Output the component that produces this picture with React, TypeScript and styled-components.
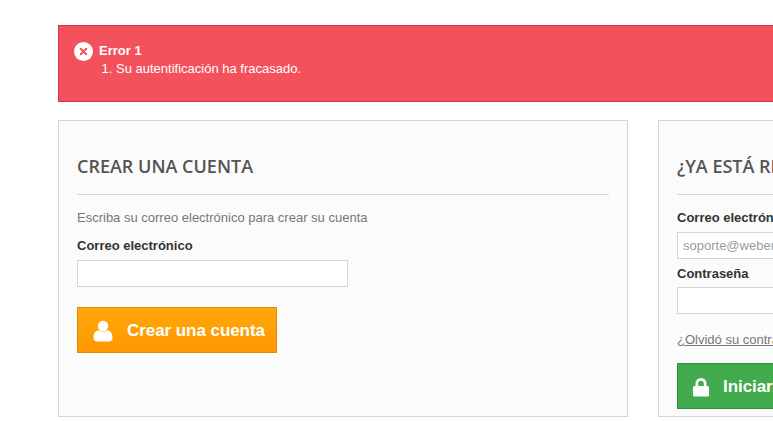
import React from "react";
import styled, { createGlobalStyle } from "styled-components";

const Global = createGlobalStyle`
  html, body { margin: 0; padding: 0; background: #fff; overflow: hidden; }
  body { font-family: "Liberation Sans", Arial, sans-serif; font-size: 13px; color: #777; }
`;

const Page = styled.div`
  width: 773px;
  height: 421px;
  overflow: hidden;
  box-sizing: border-box;
  padding: 25px 0 0 58px;
`;

const Container = styled.div`
  width: 1170px;
  display: flex;
  flex-direction: column;
  gap: 18px;
`;

const Alert = styled.div`
  box-sizing: border-box;
  height: 77px;
  background: #f3515c;
  border: 1px solid #d4343f;
  padding: 16px 15px;
  display: flex;
  gap: 6px;
  color: #fff;
  font-size: 13px;
  line-height: 18px;
`;

const AlertIcon = styled.svg`
  width: 19px;
  height: 19px;
  flex: none;
`;

const AlertTitle = styled.div`
  font-weight: 700;
`;

const AlertList = styled.ol`
  margin: 0;
  padding: 0 0 0 17px;
`;

const Columns = styled.div`
  display: flex;
  gap: 30px;
`;

const Panel = styled.section`
  box-sizing: border-box;
  width: 570px;
  height: 297px;
  background: #fbfbfb;
  border: 1px solid #d6d4d4;
  padding: 32px 18px 0;
  flex: none;
`;

const Heading = styled.h3`
  margin: 0 0 14px;
  padding: 0 0 14px;
  border-bottom: 1px solid #d6d4d4;
  font-family: "Open Sans", sans-serif;
  font-weight: 600;
  font-size: 18px;
  line-height: 27px;
  color: #555454;
  text-transform: uppercase;
`;

const Intro = styled.p`
  margin: 0 0 10px;
  line-height: 18px;
  color: #777;
`;

const Label = styled.label`
  display: block;
  margin-bottom: 5px;
  font-weight: 700;
  line-height: 18px;
  color: #333;
`;

const StackedLabel = styled(Label)`
  margin-top: 6px;
  margin-bottom: 4px;
`;

const Input = styled.input`
  display: block;
  box-sizing: border-box;
  width: 271px;
  height: 27px;
  padding: 3px 5px;
  background: #fff;
  border: 1px solid #d6d4d4;
  border-radius: 0;
  font-family: "Liberation Sans", Arial, sans-serif;
  font-size: 13px;
  color: #9c9b9b;
  outline: none;
`;

const ForgotLink = styled.a`
  display: block;
  margin-top: 17px;
  line-height: 18px;
  color: #777;
  text-decoration: underline;
  white-space: nowrap;
`;

const ActionButton = styled.button<{ $tone: "orange" | "green"; $top: number }>`
  display: flex;
  align-items: center;
  box-sizing: border-box;
  height: 46px;
  margin-top: ${(p) => p.$top}px;
  padding: 1px 11px 0 15px;
  gap: 14px;
  border: 1px solid ${(p) => (p.$tone === "orange" ? "#e08a0a" : "#2f8f3f")};
  background: ${(p) =>
    p.$tone === "orange"
      ? "linear-gradient(to bottom, #ffa80a, #ff9700)"
      : "#41ab4e"};
  color: #fff;
  font-family: "Liberation Sans", Arial, sans-serif;
  font-size: 17px;
  font-weight: 700;
  letter-spacing: -0.06px;
  white-space: nowrap;
`;

const ButtonIcon = styled.svg<{ $w: number }>`
  width: ${(p) => p.$w}px;
  height: 22px;
  flex: none;
`;

export default function App() {
  return (
    <Page>
      <Global />
      <Container>
        <Alert>
          <AlertIcon viewBox="0 0 19 19">
            <circle cx="9.5" cy="9.5" r="9.5" fill="#fff" />
            <path d="M6.7 6.7l5.6 5.6M12.3 6.7l-5.6 5.6" stroke="#f3515c" strokeWidth="2" strokeLinecap="round" />
          </AlertIcon>
          <div>
            <AlertTitle>Error 1</AlertTitle>
            <AlertList>
              <li>Su autentificación ha fracasado.</li>
            </AlertList>
          </div>
        </Alert>
        <Columns>
          <Panel>
            <Heading>Crear una cuenta</Heading>
            <Intro>Escriba su correo electrónico para crear su cuenta</Intro>
            <Label>Correo electrónico</Label>
            <Input type="text" />
            <ActionButton $tone="orange" $top={20}>
              <ButtonIcon $w={20} viewBox="0 0 20 22">
                <circle cx="10" cy="6" r="5.200" fill="#fff" />
                <path d="M.5 17.500c0-4.500 2.500-6.700 5-7.200 2.600 1.700 6.400 1.700 9 0 2.500.5 5 2.700 5 7.200 0 2.400-1.500 4-3.500 4h-12c-2 0-3.500-1.600-3.500-4z" fill="#fff" />
              </ButtonIcon>
              Crear una cuenta
            </ActionButton>
          </Panel>
          <Panel>
            <Heading>¿Ya está registrado?</Heading>
            <Label>Correo electrónico</Label>
            <Input type="text" defaultValue="soporte@webempresa.eu" />
            <StackedLabel>Contraseña</StackedLabel>
            <Input type="password" />
            <ForgotLink href="#">¿Olvidó su contraseña?</ForgotLink>
            <ActionButton $tone="green" $top={14}>
              <ButtonIcon $w={16} viewBox="0 0 16 22">
                <path d="M2.500 11V7.500a5.500 5.500 0 0 1 11 0V11h-2.700V7.500a2.800 2.800 0 0 0-5.600 0V11z" fill="#fff" />
                <rect x="0" y="10" width="16" height="10.500" rx="1.500" fill="#fff" />
              </ButtonIcon>
              Iniciar sesión
            </ActionButton>
          </Panel>
        </Columns>
      </Container>
    </Page>
  );
}
